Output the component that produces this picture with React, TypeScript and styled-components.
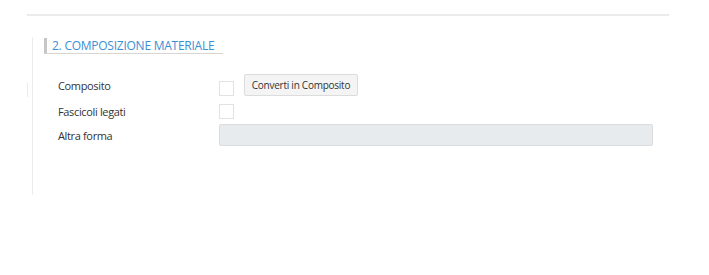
import React from "react";
import styled, { createGlobalStyle } from "styled-components";

const GlobalStyle = createGlobalStyle`
  body {
    margin: 0;
    background: #fff;
    font-family: "Open Sans", "Liberation Sans", sans-serif;
    color: #333;
  }
`;

const Page = styled.div`
  padding-top: 14px;
  width: 709px;
  height: 275px;
  box-sizing: border-box;
`;

const TopRule = styled.div`
  margin-left: 27px;
  width: 642px;
  height: 2px;
  background: #ebebeb;
`;

const Panel = styled.section`
  position: relative;
  margin: 21px 0 0 32px;
  height: 158px;
  border-left: 1px solid #ebebeb;
  padding: 1px 0 0 11px;
  box-sizing: border-box;

  &::before {
    content: "";
    position: absolute;
    left: -6px;
    top: 46px;
    width: 1px;
    height: 14px;
    background: #e3ecf1;
  }
`;

const Heading = styled.h3`
  display: flex;
  align-items: center;
  width: fit-content;
  margin: 0;
  height: 15px;
  padding: 0 9px 0 5px;
  border-left: 3px solid #c6c6c6;
  border-bottom: 1px solid #d6d6d6;
  font-size: 12px;
  letter-spacing: -0.25px;
  line-height: 15px;
  font-weight: 400;
  color: #3b8fd5;
`;

const Form = styled.div`
  margin: 20px 0 0 14px;
`;

const Row = styled.div<{ $h: number; $gap?: number }>`
  display: flex;
  align-items: center;
  height: ${(p) => p.$h}px;
  margin-top: ${(p) => p.$gap ?? 0}px;
`;

const Label = styled.label`
  width: 161px;
  flex: none;
  font-size: 11px;
  letter-spacing: -0.35px;
  color: #333;
`;

const Check = styled.span<{ $bottom?: boolean }>`
  display: inline-block;
  width: 13px;
  height: 13px;
  border: 1px solid #e2e2e2;
  background: #fff;
  align-self: ${(p) => (p.$bottom ? "flex-end" : "center")};
`;

const Button = styled.button`
  margin-left: 10px;
  height: 22px;
  width: 114px;
  padding: 0;
  border: 1px solid #dcdcdc;
  border-radius: 2px;
  background: #f4f4f4;
  font-family: inherit;
  font-size: 10px;
  letter-spacing: -0.25px;
  color: #333;
`;

const Input = styled.div`
  width: 434px;
  height: 22px;
  box-sizing: border-box;
  border: 1px solid #dadcde;
  border-radius: 2px;
  background: #e8ebee;
`;

export default function App() {
  return (
    <Page>
      <GlobalStyle />
      <TopRule />
      <Panel>
        <Heading>2. COMPOSIZIONE MATERIALE</Heading>
        <Form>
          <Row $h={22}>
            <Label>Composito</Label>
            <Check $bottom />
            <Button>Converti in Composito</Button>
          </Row>
          <Row $h={14} $gap={8}>
            <Label>Fascicoli legati</Label>
            <Check />
          </Row>
          <Row $h={22} $gap={6}>
            <Label>Altra forma</Label>
            <Input />
          </Row>
        </Form>
      </Panel>
    </Page>
  );
}
